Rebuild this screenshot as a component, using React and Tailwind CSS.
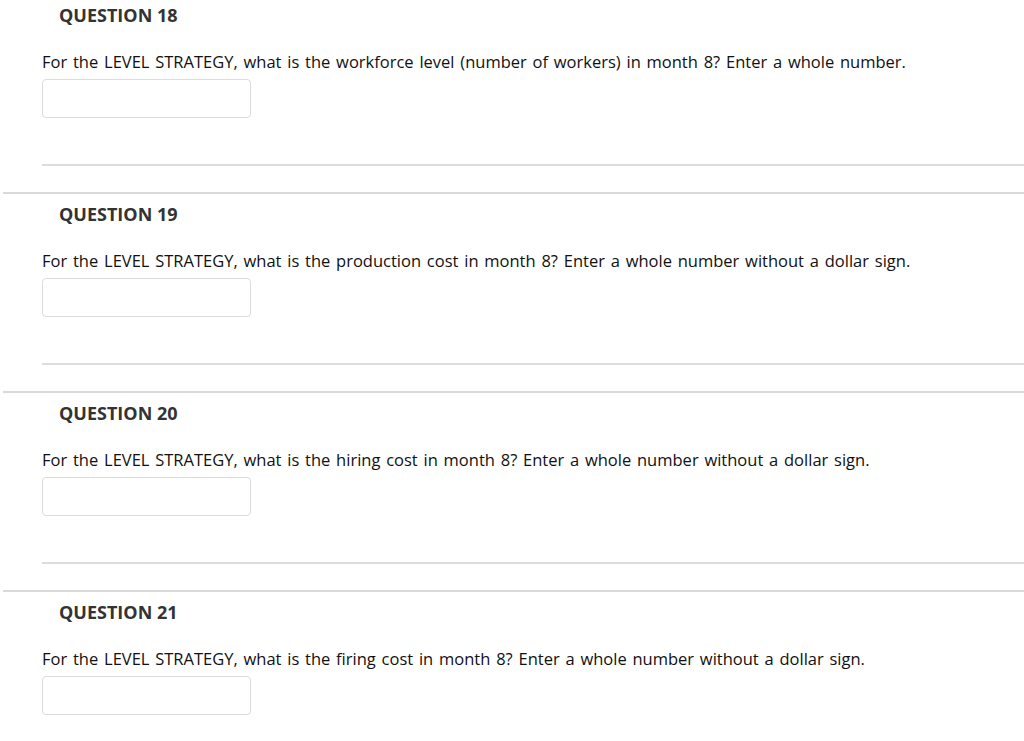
import React from "react";

const questions = [
  {
    n: 18,
    text: "For the LEVEL STRATEGY, what is the workforce level (number of workers) in month 8? Enter a whole number.",
  },
  {
    n: 19,
    text: "For the LEVEL STRATEGY, what is the production cost in month 8? Enter a whole number without a dollar sign.",
  },
  {
    n: 20,
    text: "For the LEVEL STRATEGY, what is the hiring cost in month 8? Enter a whole number without a dollar sign.",
  },
  {
    n: 21,
    text: "For the LEVEL STRATEGY, what is the firing cost in month 8? Enter a whole number without a dollar sign.",
  },
];

const App = () => {
  return (
    <div
      className="bg-white h-screen overflow-hidden"
      style={{ fontFamily: '"Open Sans", sans-serif' }}
    >
      <div className="-mt-[7px]">
        {questions.map((q) => (
          <div
            key={q.n}
            className="ml-[3px] border-t-2 border-t-[#d9d9d9] h-[199px]"
          >
            {/* heading */}
            <h3 className="pl-[56px] pt-[8px] text-[18px] leading-[24px] font-bold text-[#333]">
              QUESTION {q.n}
            </h3>

            <div className="pl-[39px]">
              <p className="mt-[24px] text-[16.5px] leading-[21px] text-[#111] [word-spacing:1.5px]">
                {q.text}
              </p>
              <input
                type="text"
                className="block mt-[7px] w-[209px] h-[39px] border border-[#dcdcdc] rounded-[4px] bg-white"
              />
              <div className="mt-[46px] border-t-2 border-t-[#dcdcdc]"></div>
            </div>
          </div>
        ))}
      </div>
    </div>
  );
};

export default App;
